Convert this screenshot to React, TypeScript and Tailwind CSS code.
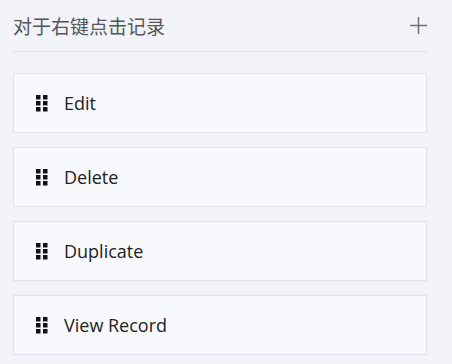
import React from 'react';

const items = ['Edit', 'Delete', 'Duplicate', 'View Record'];

const DragHandle: React.FC = () => (
  <svg width="12" height="17" viewBox="0 0 12 17" className="shrink-0">
    <rect x="0" y="0" width="4.5" height="4.5" fill="#111" />
    <rect x="7" y="0" width="4.5" height="4.5" fill="#111" />
    <rect x="0" y="6" width="4.5" height="4.5" fill="#111" />
    <rect x="7" y="6" width="4.5" height="4.5" fill="#111" />
    <rect x="0" y="12" width="4.5" height="4.5" fill="#111" />
    <rect x="7" y="12" width="4.5" height="4.5" fill="#111" />
  </svg>
);

const App: React.FC = () => {
  return (
    <div className="w-[452px] h-[364px] bg-[#f2f3f8] pl-[13px] pr-[25px] overflow-hidden" style={{ fontFamily: '"Open Sans", "Noto Sans CJK SC", sans-serif' }}>
      <div className="flex items-center justify-between h-[52px] border-b border-[#dde3f2]">
        <span className="text-[19px] text-[#555] leading-none" style={{ fontFamily: '"Noto Sans CJK SC", sans-serif' }}>对于右键点击记录</span>
        <svg width="17" height="17" viewBox="0 0 17 17">
          <path d="M8.5 0V17M0 8.5H17" stroke="#707070" strokeWidth="1.5" />
        </svg>
      </div>
      <div className="flex flex-col gap-[14px] pt-[21px]">
        {items.map((label) => (
          <div key={label} className="h-[60px] flex items-center gap-[16px] pl-[22px] bg-[#f8f9fd] border border-[#e0e3ef]">
            <DragHandle />
            <span className="text-[18px] text-[#222]">{label}</span>
          </div>
        ))}
      </div>
    </div>
  );
};

export default App;
